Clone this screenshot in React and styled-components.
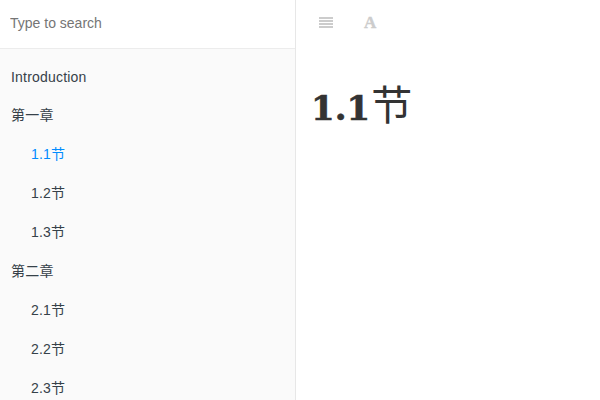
import React from "react";
import styled, { createGlobalStyle } from "styled-components";

const Global = createGlobalStyle`
  * { box-sizing: border-box; }
  body { margin: 0; background: #fff; overflow: hidden; }
`;
const Book = styled.div`
  display: flex; height: 400px; overflow: hidden;
  font-family: "Liberation Sans", "Noto Sans CJK SC", sans-serif;
`;
const Sidebar = styled.aside`
  width: 296px; flex: none; background: #fafafa; border-right: 1px solid #e7e7e7; overflow: hidden;
`;
const Search = styled.input`
  display: block; width: 100%; height: 49px; padding: 0 10px 2px; border: 0;
  border-bottom: 1px solid #ececec; background: #fff; outline: 0;
  font: 14px "Liberation Sans", sans-serif;
  &::placeholder { color: #757575; opacity: 1; }
`;
const Chapters = styled.ul`
  list-style: none; margin: 0; padding: 9px 0 0;
`;
const Chapter = styled.li`
  height: 39px; line-height: 39px; font-size: 14px; white-space: nowrap;
  letter-spacing: 0.2px;
  padding-left: ${(p) => (p.$nested ? 31 : 11)}px;
  color: ${(p) => (p.$active ? "#008cff" : "#364149")};
  &:first-child { height: 38px; }
`;
const Main = styled.main`
  flex: 1; padding: 0 16px;
`;
const Toolbar = styled.header`
  height: 50px; display: flex; align-items: flex-start; gap: 31px; padding: 17px 0 0 7px;
`;
const Icon = styled.svg`
  display: block; fill: #ccc;
`;
const FontButton = styled.span`
  font: 700 17px/12px "Liberation Serif", serif; color: #ccc;
  -webkit-text-stroke: 0.4px #ccc;
`;
const Title = styled.h1`
  display: flex; align-items: baseline; gap: 1px;
  margin: 26px 0 0 -1px; height: 52px; color: #333;
  font: 700 34px/52px "DejaVu Serif", serif;
  -webkit-text-stroke: 0.6px #333;
`;
const TitleWord = styled.span`
  font: 400 41px/52px "Noto Sans CJK SC", sans-serif;
  -webkit-text-stroke: 0;
`;

const chapters = [
  ["Introduction"], ["第一章"], ["1.1节", true, true], ["1.2节", true], ["1.3节", true],
  ["第二章"], ["2.1节", true], ["2.2节", true], ["2.3节", true],
];

export default function App() {
  return (
    <Book>
      <Global />
      <Sidebar>
        <Search placeholder="Type to search" />
        <Chapters>
          {chapters.map(([t, nested, active]) => (
            <Chapter key={t} $nested={nested} $active={active}>{t}</Chapter>
          ))}
        </Chapters>
      </Sidebar>
      <Main>
        <Toolbar>
          <Icon width="14" height="12" viewBox="0 0 14 12" shapeRendering="crispEdges"><path d="M0 0h14v2H0zM0 3h14v2H0zM0 6h14v2H0zM0 9h14v2H0z" /></Icon>
          <FontButton>A</FontButton>
        </Toolbar>
        <Title>1.1<TitleWord>节</TitleWord></Title>
      </Main>
    </Book>
  );
}
